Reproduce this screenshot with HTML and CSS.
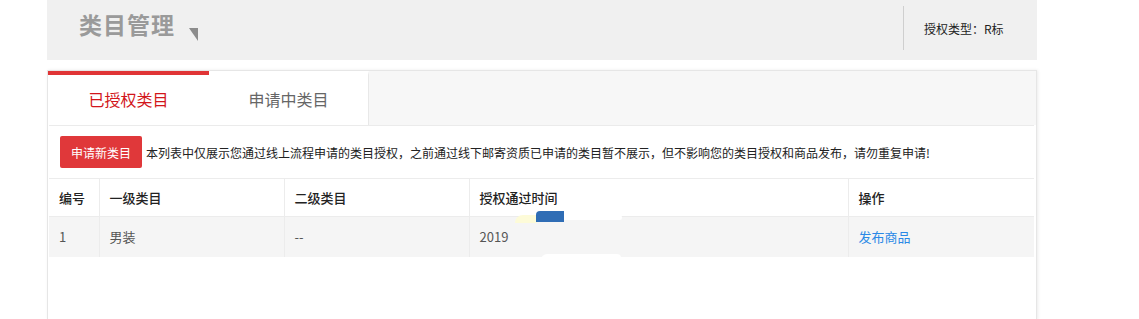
FILE: index.html
```html
<!DOCTYPE html>
<html lang="zh-CN">
<head>
<meta charset="utf-8">
<title>类目管理</title>
<link rel="stylesheet" href="styles.css">
</head>
<body>
<div class="page">
  <header class="topbar">
    <h1 class="title">类目管理</h1>
    <span class="corner"></span>
    <div class="auth-type">授权类型：R标</div>
  </header>

  <section class="panel">
    <nav class="tabs">
      <div class="tab active">已授权类目</div>
      <div class="tab">申请中类目</div>
    </nav>
    <div class="content">
      <div class="notice">
        <button class="btn-apply">申请新类目</button>
        <span class="notice-text">本列表中仅展示您通过线上流程申请的类目授权，之前通过线下邮寄资质已申请的类目暂不展示，但不影响您的类目授权和商品发布，请勿重复申请!</span>
      </div>
      <div class="table-wrap">
        <table class="grid">
          <colgroup>
            <col class="c1"><col class="c2"><col class="c3"><col class="c4"><col class="c5">
          </colgroup>
          <thead>
            <tr><th>编号</th><th>一级类目</th><th>二级类目</th><th>授权通过时间</th><th>操作</th></tr>
          </thead>
          <tbody>
            <tr><td>1</td><td>男装</td><td>--</td><td>2019</td><td><a class="link" href="#">发布商品</a></td></tr>
          </tbody>
        </table>
        <span class="smear"></span>
        <span class="smear-low"></span>
        <span class="mark-yellow"></span>
        <span class="mark-blue"></span>
      </div>
    </div>
  </section>
</div>
</body>
</html>
```

FILE: styles.css
```css
html, body {
  margin: 0;
  padding: 0;
  background: #fff;
  overflow: hidden;
}
body {
  font-family: "Noto Sans CJK SC", "Noto Sans", sans-serif;
  color: #333;
}
.page {
  width: 990px;
  margin-left: 47px;
}
.topbar {
  height: 60px;
  background: #f0f0f0;
  display: flex;
  align-items: center;
  padding-left: 32px;
  box-sizing: border-box;
}
.title {
  margin: 0;
  font-size: 23px;
  font-weight: 700;
  color: #9a9a9a;
  line-height: 1;
  position: relative;
  top: -6px;
  letter-spacing: 1px;
}
.corner {
  width: 0;
  height: 0;
  border-top: 13px solid #8c8c8c;
  border-left: 9px solid transparent;
  margin-left: 14px;
  margin-top: 8px;
}
.auth-type {
  margin-left: auto;
  width: 134px;
  height: 44px;
  box-sizing: border-box;
  border-left: 1px solid #cfcfcf;
  padding-left: 20px;
  font-size: 12px;
  color: #222;
  display: flex;
  align-items: center;
  position: relative;
  top: -2px;
}
.panel {
  margin-top: 10px;
  border: 1px solid #e6e6e6;
  box-shadow: 1px 0 3px rgba(0, 0, 0, 0.08);
  height: 250px;
  box-sizing: border-box;
  background: #fff;
  overflow: hidden;
}
.tabs {
  display: flex;
  height: 54px;
  background: #f7f7f7;
}
.tab {
  width: 160px;
  box-sizing: border-box;
  background: #fff;
  border-right: 1px solid #e8e8e8;
  border-top: 4px solid transparent;
  display: flex;
  align-items: center;
  justify-content: center;
  font-size: 16px;
  color: #666;
  padding-bottom: 2px;
}
.tab.active {
  border-top-color: #e03436;
  color: #d2161b;
  border-right: none;
  width: 161px;
}
.content {
  margin: 0 2px 0 1px;
  border-top: 1px solid #ebebeb;
  background: #fff;
  height: 100%;
}
.notice {
  height: 52px;
  display: flex;
  align-items: center;
  padding-left: 11px;
  box-sizing: border-box;
}
.btn-apply {
  width: 82px;
  height: 32px;
  border: none;
  border-radius: 2px;
  background: #e0383a;
  color: #fff;
  font-family: inherit;
  font-size: 12px;
  padding: 0;
  margin-right: 4px;
}
.notice-text {
  font-size: 12px;
  color: #222;
}
.table-wrap {
  position: relative;
}
.grid {
  width: 100%;
  border-collapse: collapse;
  table-layout: fixed;
  font-size: 13px;
}
.c1 { width: 50px; }
.c2 { width: 185px; }
.c3 { width: 185px; }
.c4 { width: 379px; }
.c5 { width: auto; }
.grid th,
.grid td {
  text-align: left;
  padding: 0 0 0 10px;
  border-left: 1px solid #ececec;
}
.grid th:first-child,
.grid td:first-child {
  border-left: none;
}
.grid thead tr {
  height: 38px;
  border-top: 1px solid #ececec;
  border-bottom: 1px solid #ececec;
}
.grid th {
  font-weight: 500;
  color: #222;
  background: #fff;
}
.grid tbody tr {
  height: 40px;
  background: #f5f5f5;
}
.grid td {
  color: #555;
}
.link {
  color: #2a89e6;
  text-decoration: none;
}
.smear {
  position: absolute;
  left: 515px;
  top: 34px;
  width: 58px;
  height: 8px;
  background: #fff;
  border-radius: 0 10px 4px 0;
}
.smear-low {
  position: absolute;
  left: 492px;
  top: 76px;
  width: 80px;
  height: 6px;
  background: #fff;
  border-radius: 30px 20px 0 0;
}
.mark-yellow {
  position: absolute;
  left: 466px;
  top: 37px;
  width: 22px;
  height: 8px;
  background: #fdfbd8;
  border-radius: 12px 0 0 0;
}
.mark-blue {
  position: absolute;
  left: 487px;
  top: 33px;
  width: 28px;
  height: 11px;
  background: #2f6db5;
  border-radius: 4px 0 0 0;
}
```
